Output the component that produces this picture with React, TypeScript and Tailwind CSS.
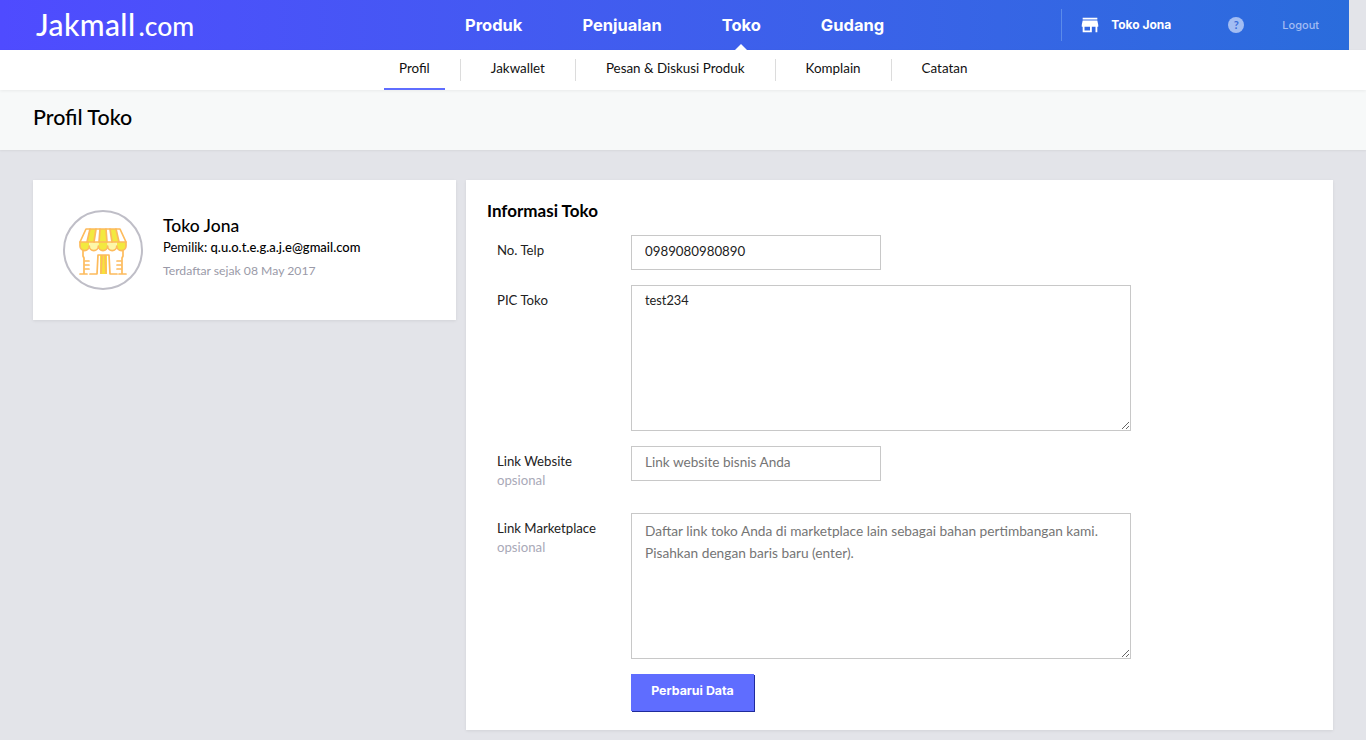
import React from "react";
import { MdStore } from "react-icons/md";

const font = "font-['Lato','Liberation_Sans',sans-serif]";

function ShopIcon() {
  return (
    <svg width="48" height="48" viewBox="0 0 48 48" fill="none" className="mt-[3px]">
      <path d="M7 1H41L47 14H1Z" fill="#ffffff" />
      <path d="M11 1H17L15 14H8ZM21 1H27L28 14H20ZM31 1H37L40 14H33Z" fill="#f2e93f" />
      <path d="M1 14H10.2V18a4.6 4.6 0 0 1-9.2 0ZM19.4 14H28.6V18a4.6 4.6 0 0 1-9.2 0ZM37.8 14H47V18a4.6 4.6 0 0 1-9.2 0Z" fill="#f2e93f" />
      <path d="M10.2 14H19.4V18a4.6 4.6 0 0 1-9.2 0ZM28.6 14H37.8V18a4.6 4.6 0 0 1-9.2 0Z" fill="#fdf7a8" />
      <path d="M21 27H28V46H21Z" fill="#f7e13c" />
      <g stroke="#fdbb5c" strokeWidth="1.7" strokeLinecap="round" strokeLinejoin="round">
        <path d="M7 1H41L47 14H1Z" />
        <path d="M1 14V18a4.6 4.6 0 0 0 9.2 0a4.6 4.6 0 0 0 9.2 0a4.6 4.6 0 0 0 9.2 0a4.6 4.6 0 0 0 9.2 0a4.6 4.6 0 0 0 9.2 0V14" />
        <path d="M11 1L8 14M17 1L15 14M21 1L20 14M27 1L28 14M31 1L33 14M37 1L40 14" />
        <path d="M4 23V28L5 30V45M44 23V28L43 30V45M1 46H8M40 46H47" />
        <path d="M11 46H18L19 27H30L31 46H38M23 27L22 45M26 27L27 45" />
        <path d="M6 33H10M6 37H10M6 41H10M38 33H42M38 37H42M38 41H42" />
      </g>
    </svg>
  );
}

function Sep() {
  return <span className="mx-[15px] h-[22px] w-px bg-[#dcdcdc]" />;
}

function Tab({ children, active }: { children: React.ReactNode; active?: boolean }) {
  return (
    <span className={`flex h-10 items-center whitespace-nowrap px-[15px] text-[13.4px] text-[#111] ${active ? "border-b-2 border-[#5f6dff] pb-[1px]" : "pb-[3px]"}`}>
      {children}
    </span>
  );
}

function Row({ label, optional, className, children }: { label: string; optional?: boolean; className?: string; children: React.ReactNode }) {
  return (
    <div className={`flex pl-[31px] ${className ?? ""}`}>
      <div className="w-[134px] pt-[5px] text-[13.2px] leading-[20px] text-[#222]">
        <div>{label}</div>
        {optional && <div className="-mt-[1px] text-[#a9a9b8]">opsional</div>}
      </div>
      {children}
    </div>
  );
}

export default function App() {
  return (
    <div className={`${font} min-h-[740px] w-full overflow-hidden bg-[#e3e4e9] text-black`}>
      <header className="flex h-[50px] w-[1349px] items-center bg-gradient-to-r from-[#4f4bff] to-[#2a6cdc] text-white">
        <div className="flex w-[465px] items-baseline pb-[2px] pl-[36px] font-medium leading-none">
          <span className="text-[30px] tracking-[0.4px]">Jakmall</span>
          <span className="ml-[3px] text-[26.5px]">.com</span>
        </div>
        <nav className="flex items-center gap-[60px] text-[16.5px] font-bold font-['Inter',sans-serif]">
          <span>Produk</span>
          <span>Penjualan</span>
          <span className="relative">
            Toko
            <span className="absolute left-1/2 top-[31px] h-0 w-0 -translate-x-1/2 border-x-[6px] border-b-[6px] border-x-transparent border-b-white" />
          </span>
          <span>Gudang</span>
        </nav>
        <div className="ml-auto flex h-8 items-center border-l border-[#5b8bea] pl-[17px] pr-[30px]">
          <MdStore className="text-[22px]" />
          <span className="ml-[10px] text-[12px] font-bold font-['Inter',sans-serif]">Toko Jona</span>
          <span className="ml-[57px] flex h-[16px] w-[16px] items-center justify-center rounded-full bg-[#a3bdf3] text-[11px] font-bold text-[#3a6cd8]">?</span>
          <span className="ml-[38px] text-[11px] font-medium font-['Inter',sans-serif] text-[#a3bdf3]">Logout</span>
        </div>
      </header>

      <div className="relative flex h-10 items-center justify-start bg-white pl-[384px] shadow-[0_1px_3px_rgba(0,0,0,0.06)]">
        <Tab active>Profil</Tab>
        <Sep />
        <Tab>Jakwallet</Tab>
        <Sep />
        <Tab>Pesan &amp; Diskusi Produk</Tab>
        <Sep />
        <Tab>Komplain</Tab>
        <Sep />
        <Tab>Catatan</Tab>
      </div>

      <div className="flex h-[60px] items-center bg-[#f7f9f9] pb-[5px] pl-[33px] text-[21.4px] font-medium shadow-[0_1px_2px_rgba(0,0,0,0.06)]">
        Profil Toko
      </div>

      <main className="flex items-start gap-[10px] px-[33px] pb-[10px] pt-[30px]">
        <section className="flex h-[140px] w-[423px] items-center bg-white pl-[30px] shadow-[0_1px_3px_rgba(0,0,0,0.08)]">
          <div className="flex h-20 w-20 items-center justify-center rounded-full border-2 border-[#bfbec7]">
            <ShopIcon />
          </div>
          <div className="ml-[20px] pb-[4px]">
            <div className="text-[17.5px] font-medium leading-[22px]">Toko Jona</div>
            <div className="text-[13px] leading-[20px]">
              Pemilik: <span className="font-medium">q.u.o.t.e.g.a.j.e@gmail.com</span>
            </div>
            <div className="mt-[4px] text-[12.2px] leading-[20px] text-[#9a9aa8]">Terdaftar sejak 08 May 2017</div>
          </div>
        </section>

        <section className="h-[550px] w-[867px] bg-white pt-[20px] shadow-[0_1px_3px_rgba(0,0,0,0.08)]">
          <h2 className="pl-[21px] text-[17px] font-bold leading-[22px]">Informasi Toko</h2>
          <Row label="No. Telp" className="mt-[13px]">
            <input readOnly value="0989080980890" className="h-[35px] w-[250px] border border-[#c8c8c8] px-[13px] pb-[3px] text-[13.3px] text-[#222] outline-none" />
          </Row>
          <Row label="PIC Toko" className="mt-[15px]">
            <textarea readOnly value="test234" className="block h-[146px] w-[500px] border border-[#c8c8c8] px-[13px] py-[4px] text-[12.8px] leading-[20px] text-[#222] outline-none" />
          </Row>
          <Row label="Link Website" optional className="mt-[15px]">
            <input readOnly placeholder="Link website bisnis Anda" className="h-[35px] w-[250px] border border-[#c8c8c8] px-[13px] pb-[3px] text-[13.6px] outline-none placeholder:text-[#757575]" />
          </Row>
          <Row label="Link Marketplace" optional className="mt-[23px]">
            <textarea readOnly placeholder={"Daftar link toko Anda di marketplace lain sebagai bahan pertimbangan kami. Pisahkan dengan baris baru (enter)."} className="block h-[146px] w-[500px] border border-[#c8c8c8] px-[13px] py-[6px] text-[13.7px] leading-[22px] outline-none placeholder:text-[#757575]" />
          </Row>
          <div className="mt-[15px] pl-[165px]">
            <button className="h-[37px] w-[123px] bg-[#5f6dff] pb-[3px] text-[12.4px] font-bold font-['Inter',sans-serif] text-white shadow-[1px_1px_0_#1f2a9c]">Perbarui Data</button>
          </div>
        </section>
      </main>
    </div>
  );
}
